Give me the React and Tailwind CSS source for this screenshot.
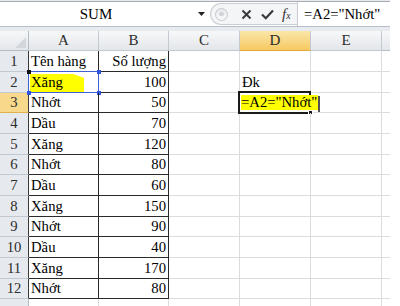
import React from 'react';

const SERIF =
  "font-['Liberation_Serif','Times_New_Roman',Times,'Tinos','Noto_Serif','DejaVu_Serif','FreeSerif','Nimbus_Roman','Nimbus_Roman_No9_L',Georgia,serif]";

const COLS = [29, 70, 70, 71, 71, 71, 8];
const HEIGHTS = [21, 21, 20, 21, 21, 20, 21, 21, 20, 21, 21, 20, 21];

const data = [
  ['Tên hàng', 'Số lượng'],
  ['Xăng', '100'],
  ['Nhớt', '50'],
  ['Dầu', '70'],
  ['Xăng', '120'],
  ['Nhớt', '80'],
  ['Dầu', '60'],
  ['Xăng', '150'],
  ['Nhớt', '90'],
  ['Dầu', '40'],
  ['Xăng', '170'],
  ['Nhớt', '80'],
  ['', ''],
];

function FormulaBar() {
  return (
    <div className="flex h-[25px] border-b border-[#b9bfc8] bg-white">
      {/* name box */}
      <div className={'w-[192px] flex items-center justify-center text-[15px] text-black ' + SERIF}>
        SUM
      </div>
      <div className="w-[18px] flex items-center justify-center">
        <svg width="7" height="4" viewBox="0 0 7 4">
          <path d="M0 0 L7 0 L3.5 4 Z" fill="#222" />
        </svg>
      </div>
      {/* buttons */}
      <div className="w-[87px] flex items-center rounded-l-[12px] border border-r-0 border-[#c9cdd3] bg-[#f4f5f7] mt-[1px] mb-[1px]">
        <div className="ml-[4px] w-[13px] h-[13px] rounded-full border border-[#c4c8ce] bg-gradient-to-b from-[#e6e8eb] to-[#fafafa] flex items-center justify-center">
          <div className="w-[5px] h-[4px] rounded-full bg-[#cfd2d6]" />
        </div>
        <div className="ml-[13px] flex items-center">
          <svg width="11" height="11" viewBox="0 0 11 11">
            <path d="M1.5 1.5 L9.5 9.5 M9.5 1.5 L1.5 9.5" stroke="#3a3a3a" strokeWidth="2" />
          </svg>
        </div>
        <div className="ml-[9px] flex items-center">
          <svg width="13" height="11" viewBox="0 0 13 11">
            <path d="M1 5.5 L4.8 9.2 L12 1.5" stroke="#3a3a3a" strokeWidth="2.2" fill="none" />
          </svg>
        </div>
        <div className={'ml-[8px] text-[15px] italic text-[#333] leading-none ' + SERIF}>
          f<span className="text-[10px]">x</span>
        </div>
      </div>
      {/* formula text */}
      <div className={'flex-1 border-l border-[#c9cdd3] flex items-center pl-[6px] text-[14.7px] text-black whitespace-nowrap ' + SERIF}>
        =A2="Nhớt"
      </div>
    </div>
  );
}

function HeaderRow() {
  const letters = ['A', 'B', 'C', 'D', 'E', ''];
  return (
    <div className="flex h-[20px]">
      <div className="w-[29px] h-full border-r border-b border-[#b4bcc6] bg-gradient-to-b from-[#f6f7f8] to-[#e4e7eb] flex items-end justify-end p-[2px]">
        <svg width="11" height="11" viewBox="0 0 11 11">
          <path d="M11 0 L11 11 L0 11 Z" fill="#d3d7dc" />
        </svg>
      </div>
      {letters.map((l, i) => {
        const sel = l === 'D';
        const last = i === letters.length - 1;
        return (
          <div
            key={i}
            style={{ width: COLS[i + 1] }}
            className={
              'h-full flex items-center justify-center text-[15px] text-[#2d2d2d] border-b ' +
              SERIF +
              ' ' +
              (last ? 'border-[#b4bcc6] ' : 'border-r border-[#c3c9d1] ') +
              (sel
                ? 'bg-gradient-to-b from-[#fbe6a8] to-[#f5c95f] border-b-[#e2a93c]'
                : 'bg-gradient-to-b from-[#f7f8f9] to-[#e3e6ea]')
            }
          >
            {l}
          </div>
        );
      })}
    </div>
  );
}

function Row({ index, h }) {
  const n = index + 1;
  const [a, b] = data[index];
  const inTable = n <= 12;
  const selRow = n === 3;
  const dark = 'border-[#2a2a2a]';
  const grid = 'border-[#dadcdf]';
  return (
    <div className={'flex text-[14.7px] ' + SERIF} style={{ height: h }}>
      {/* row header */}
      <div
        className={
          'w-[29px] h-full flex items-end justify-center text-[#2d2d2d] border-b border-r ' +
          (selRow ? 'bg-[#f8d98c] border-b-[#e2b04a] ' : 'bg-[#e6e9ed] border-b-[#c3c9d1] ') +
          (inTable ? 'border-r-[#3a3a3a]' : 'border-r-[#b4bcc6]')
        }
      >
        {inTable && <span className="leading-none pb-[2px]">{n}</span>}
      </div>
      {/* A */}
      <div className={'relative w-[70px] h-full border-r border-b flex items-end pl-[2px] text-black ' + (inTable ? dark : grid)}>
        {n === 2 && (
          <div className="absolute left-[1px] top-[2px] w-[54px] h-[18px] bg-[#ffff00] [clip-path:polygon(0_0,80%_0,100%_22%,100%_100%,0_100%)]" />
        )}
        <span className="relative leading-none pb-[2px] whitespace-nowrap">{a}</span>
        {n === 2 && (
          <>
            <div className="absolute -left-[1px] -top-[1px] w-[71px] h-[22px] border border-[#3d5fd8]" />
            <div className="absolute -left-[2px] -top-[2px] w-[4px] h-[4px] bg-[#111]" />
            <div className="absolute -right-[3px] -top-[2px] w-[4px] h-[4px] bg-[#2f55e0]" />
            <div className="absolute -left-[2px] -bottom-[3px] w-[4px] h-[4px] bg-[#2f55e0]" />
            <div className="absolute -right-[3px] -bottom-[3px] w-[4px] h-[4px] bg-[#2f55e0]" />
          </>
        )}
      </div>
      {/* B */}
      <div className={'w-[70px] h-full border-r border-b flex items-end justify-end pr-[2px] text-black ' + (inTable ? dark : grid)}>
        <span className="leading-none pb-[2px] whitespace-nowrap">{b}</span>
      </div>
      {/* C */}
      <div className={'w-[71px] h-full border-r border-b ' + grid} />
      {/* D */}
      <div className={'relative z-10 w-[71px] h-full border-r border-b flex items-end text-black ' + grid}>
        {n === 2 && <span className="pl-[2px] leading-none pb-[2px]">Đk</span>}
        {n === 3 && (
          <>
            <div className="absolute -left-[2px] -top-[2px] w-[73px] h-[23px] border-2 border-[#1a1a1a]" />
            <div className="absolute -right-[3px] -bottom-[3px] w-[5px] h-[5px] bg-[#1a1a1a] border border-white" />
            <span className="relative ml-[1px] mb-[2px] bg-[#ffff00] leading-[15px] whitespace-nowrap pr-[1px]">
              =A2="Nhớt"
            </span>
            <div className="absolute left-[78px] top-[3px] w-[1.5px] h-[16px] bg-[#555]" />
          </>
        )}
      </div>
      {/* E */}
      <div className={'w-[71px] h-full border-r border-b ' + grid} />
      {/* F */}
      <div className={'w-[8px] h-full border-b ' + grid} />
    </div>
  );
}

export default function App() {
  return (
    <div className="w-[400px] h-[306px] overflow-hidden bg-white">
      <div className="w-[390px]">
        <div className="h-[1px] bg-[#e6e8eb]" />
        <div className="h-[1px] bg-[#a9aeb6]" />
        <FormulaBar />
        <div className="h-[4px] bg-[#e7eaee]" />
        <HeaderRow />
        {HEIGHTS.map((h, i) => (
          <Row key={i} index={i} h={h} />
        ))}
      </div>
    </div>
  );
}
